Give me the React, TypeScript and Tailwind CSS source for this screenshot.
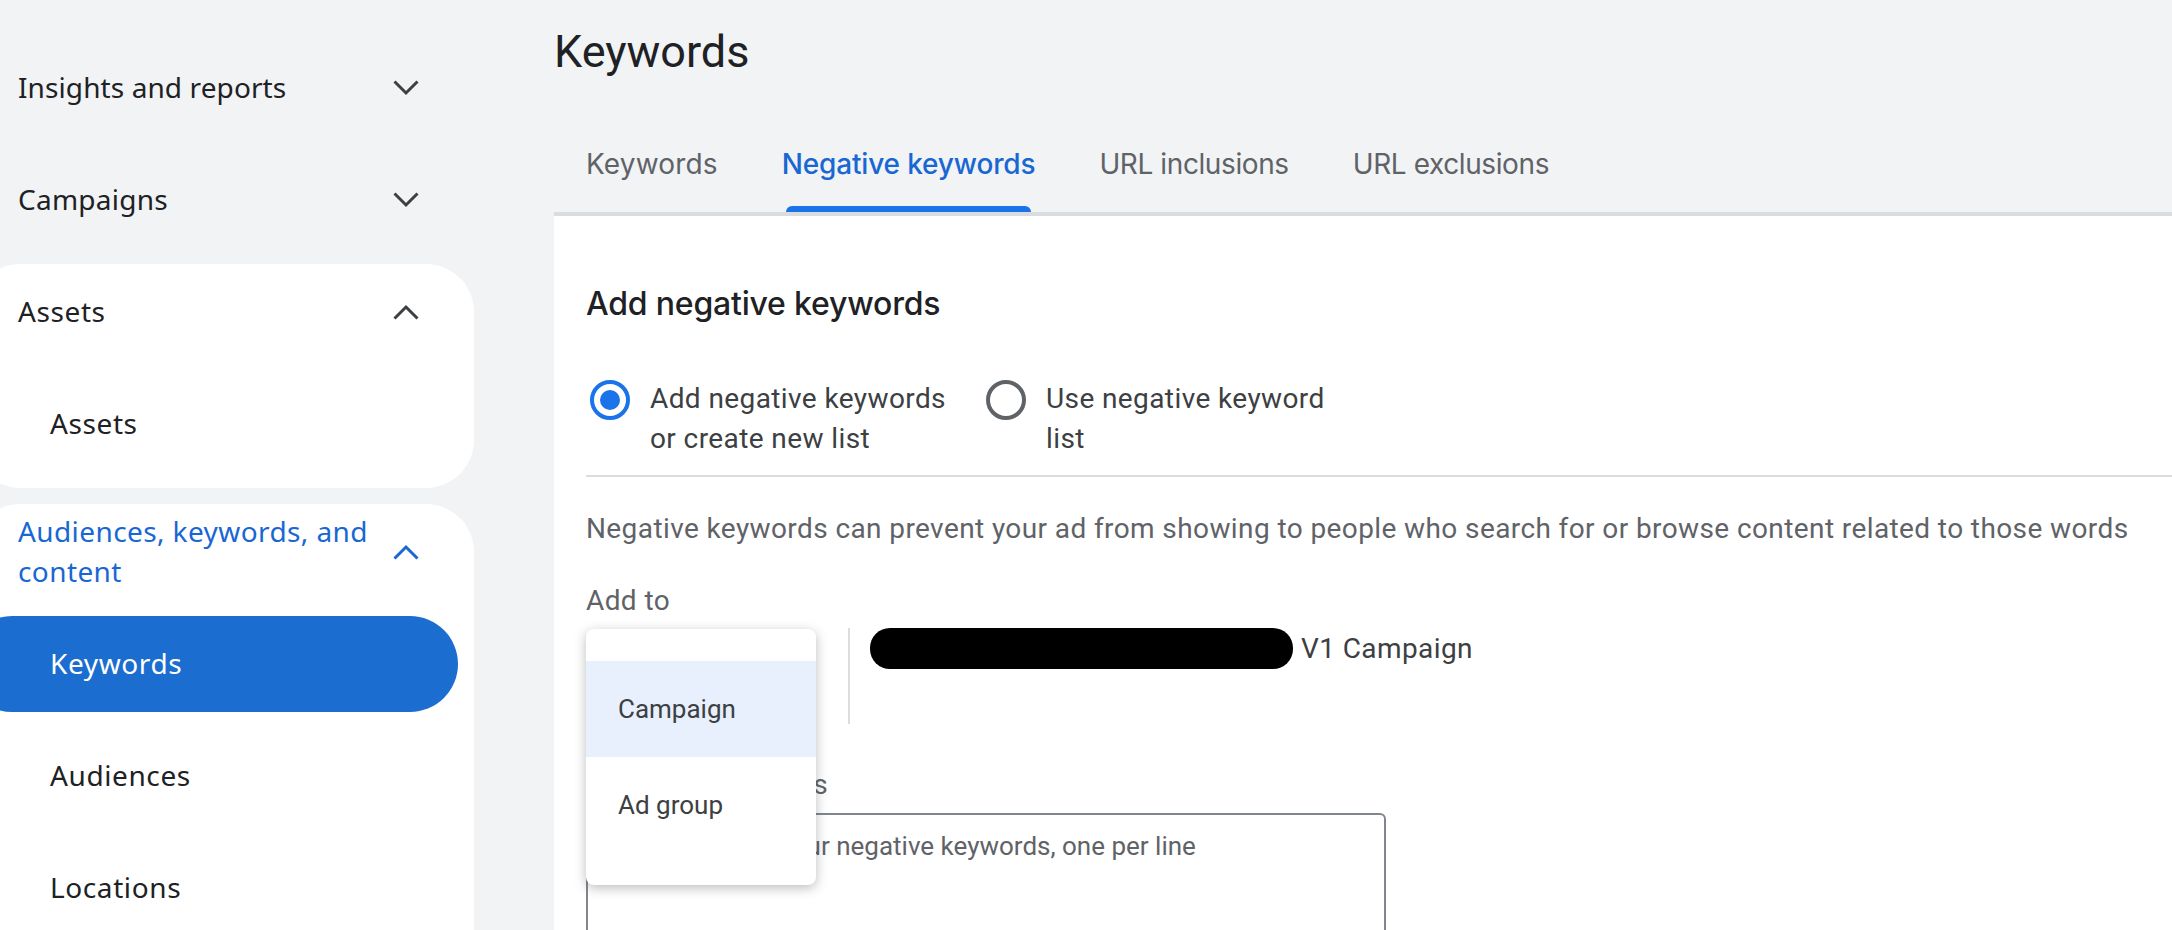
import React from "react";

const Chevron = ({ up, color }: { up?: boolean; color: string }) => (
  <svg width="26" height="16" viewBox="0 0 26 16" fill="none" className="shrink-0">
    <path d={up ? "M1.5 14.5 L13 3 L24.5 14.5" : "M1.5 1.5 L13 13 L24.5 1.5"} stroke={color} strokeWidth="3" />
  </svg>
);

const nav = "font-['Noto_Sans','Liberation_Sans',sans-serif] text-[28px] leading-10 tracking-[0.6px]";

export default function App() {
  return (
    <div className="flex h-[930px] w-[2172px] overflow-hidden bg-[#f1f3f5] font-['Roboto',sans-serif] text-[28px] leading-10 tracking-[0.4px] text-[#3c4043]">
      <aside className={`flex w-[554px] shrink-0 flex-col gap-4 pt-10 text-[#202124] ${nav}`}>
        <div className="flex h-24 w-[474px] shrink-0 items-center justify-between pl-[18px] pr-[55px]">
          <span className="-mt-[3px] tracking-[0.1px]">Insights and reports</span>
          <Chevron color="#3c4043" />
        </div>
        <div className="flex h-24 w-[474px] shrink-0 items-center justify-between pl-[18px] pr-[55px]">
          <span className="-mt-[3px] tracking-[0.25px]">Campaigns</span>
          <Chevron color="#3c4043" />
        </div>
        <div className="-ml-7 flex w-[502px] shrink-0 flex-col gap-4 rounded-[48px] bg-white pb-4">
          <div className="flex h-24 items-center justify-between pl-[46px] pr-[55px]">
            <span className="-mt-[3px]">Assets</span>
            <Chevron up color="#3c4043" />
          </div>
          <div className="flex h-24 items-center pb-[3px] pl-[78px]">Assets</div>
        </div>
        <div className="-ml-7 flex w-[502px] flex-1 flex-col gap-4 rounded-t-[48px] bg-white">
          <div className="flex h-24 shrink-0 items-center justify-between pl-[46px] pr-[55px] text-[#1967d2]">
            <span className="-mt-[3px] w-[360px] tracking-[0.4px]">Audiences, keywords, and content</span>
            <Chevron up color="#1967d2" />
          </div>
          <div className="-ml-2 flex h-24 w-[494px] shrink-0 items-center rounded-full bg-[#1c6dd0] pb-[3px] pl-[86px] text-white">Keywords</div>
          <div className="flex h-24 shrink-0 items-center pb-[3px] pl-[78px]">Audiences</div>
          <div className="flex h-24 shrink-0 items-center pb-[3px] pl-[78px]">Locations</div>
        </div>
      </aside>

      <main className="flex min-w-0 flex-1 flex-col">
        <h1 className="flex h-[104px] shrink-0 items-center text-[45px] font-normal tracking-normal text-[#202124]">Keywords</h1>
        <div className="flex h-[112px] shrink-0 gap-16 border-b-4 border-[#dadce0] pl-8 font-['Inter',sans-serif] tracking-normal text-[#5f6368]">
          <div className="flex h-full items-center pt-[12px] tracking-[0.15px]">Keywords</div>
          <div className="relative flex h-full items-center pt-[12px] font-medium tracking-[-0.15px] text-[#1967d2]">
            Negative keywords
            <div className="absolute bottom-0 left-[4px] right-[4px] h-[6px] rounded-t-md bg-[#1a73e8]" />
          </div>
          <div className="flex h-full items-center pt-[12px] tracking-[-0.4px]">URL inclusions</div>
          <div className="flex h-full items-center pt-[12px] tracking-[-0.4px]">URL exclusions</div>
        </div>

        <section className="flex-1 bg-white pl-8 pt-[68px]">
          <h2 className="font-['Inter',sans-serif] text-[32px] font-medium tracking-[-0.2px] text-[#202124]">Add negative keywords</h2>
          <div className="mt-[55px] flex border-b-2 border-[#dadce0] pb-4">
            <div className="flex w-[400px] items-start pl-1">
              <span className="mt-px flex h-10 w-10 shrink-0 items-center justify-center rounded-full border-4 border-[#1a73e8]">
                <span className="h-5 w-5 rounded-full bg-[#1a73e8]" />
              </span>
              <span className="ml-5 w-[300px]">Add negative keywords or create new list</span>
            </div>
            <div className="flex items-start">
              <span className="mt-px h-10 w-10 shrink-0 rounded-full border-4 border-[#5f6368]" />
              <span className="ml-5 w-[290px]">Use negative keyword list</span>
            </div>
          </div>
          <p className="mt-[32px] whitespace-nowrap text-[#5f6368]">Negative keywords can prevent your ad from showing to people who search for or browse content related to those words</p>
          <div className="mt-8 text-[#5f6368]">Add to</div>
          <div className="relative mt-[7px]">
            <div className="flex items-start pl-[262px]">
              <div className="h-24 w-0.5 bg-[#dadce0]" />
              <div className="ml-5 h-[41px] w-[423px] rounded-[20px] bg-black" />
              <span className="ml-2 mt-px">V1 Campaign</span>
            </div>
            <div className="absolute left-0 top-px z-10 flex h-64 w-[230px] flex-col justify-center rounded-lg bg-white text-[26px] tracking-normal shadow-[0_3px_12px_rgba(60,64,67,0.35)]">
              <div className="flex h-24 items-center bg-[#e7f0fc] pl-8">Campaign</div>
              <div className="flex h-24 items-center pl-8">Ad group</div>
            </div>
            <div className="mt-[41px] text-[#5f6368]">Negative keywords</div>
            <div className="mt-2 h-[200px] w-[800px] rounded-t-md border-2 border-[#80868b] pl-6 pt-[11px] text-[26px] tracking-normal text-[#5f6368]">Enter or paste your negative keywords, one per line</div>
          </div>
        </section>
      </main>
    </div>
  );
}
